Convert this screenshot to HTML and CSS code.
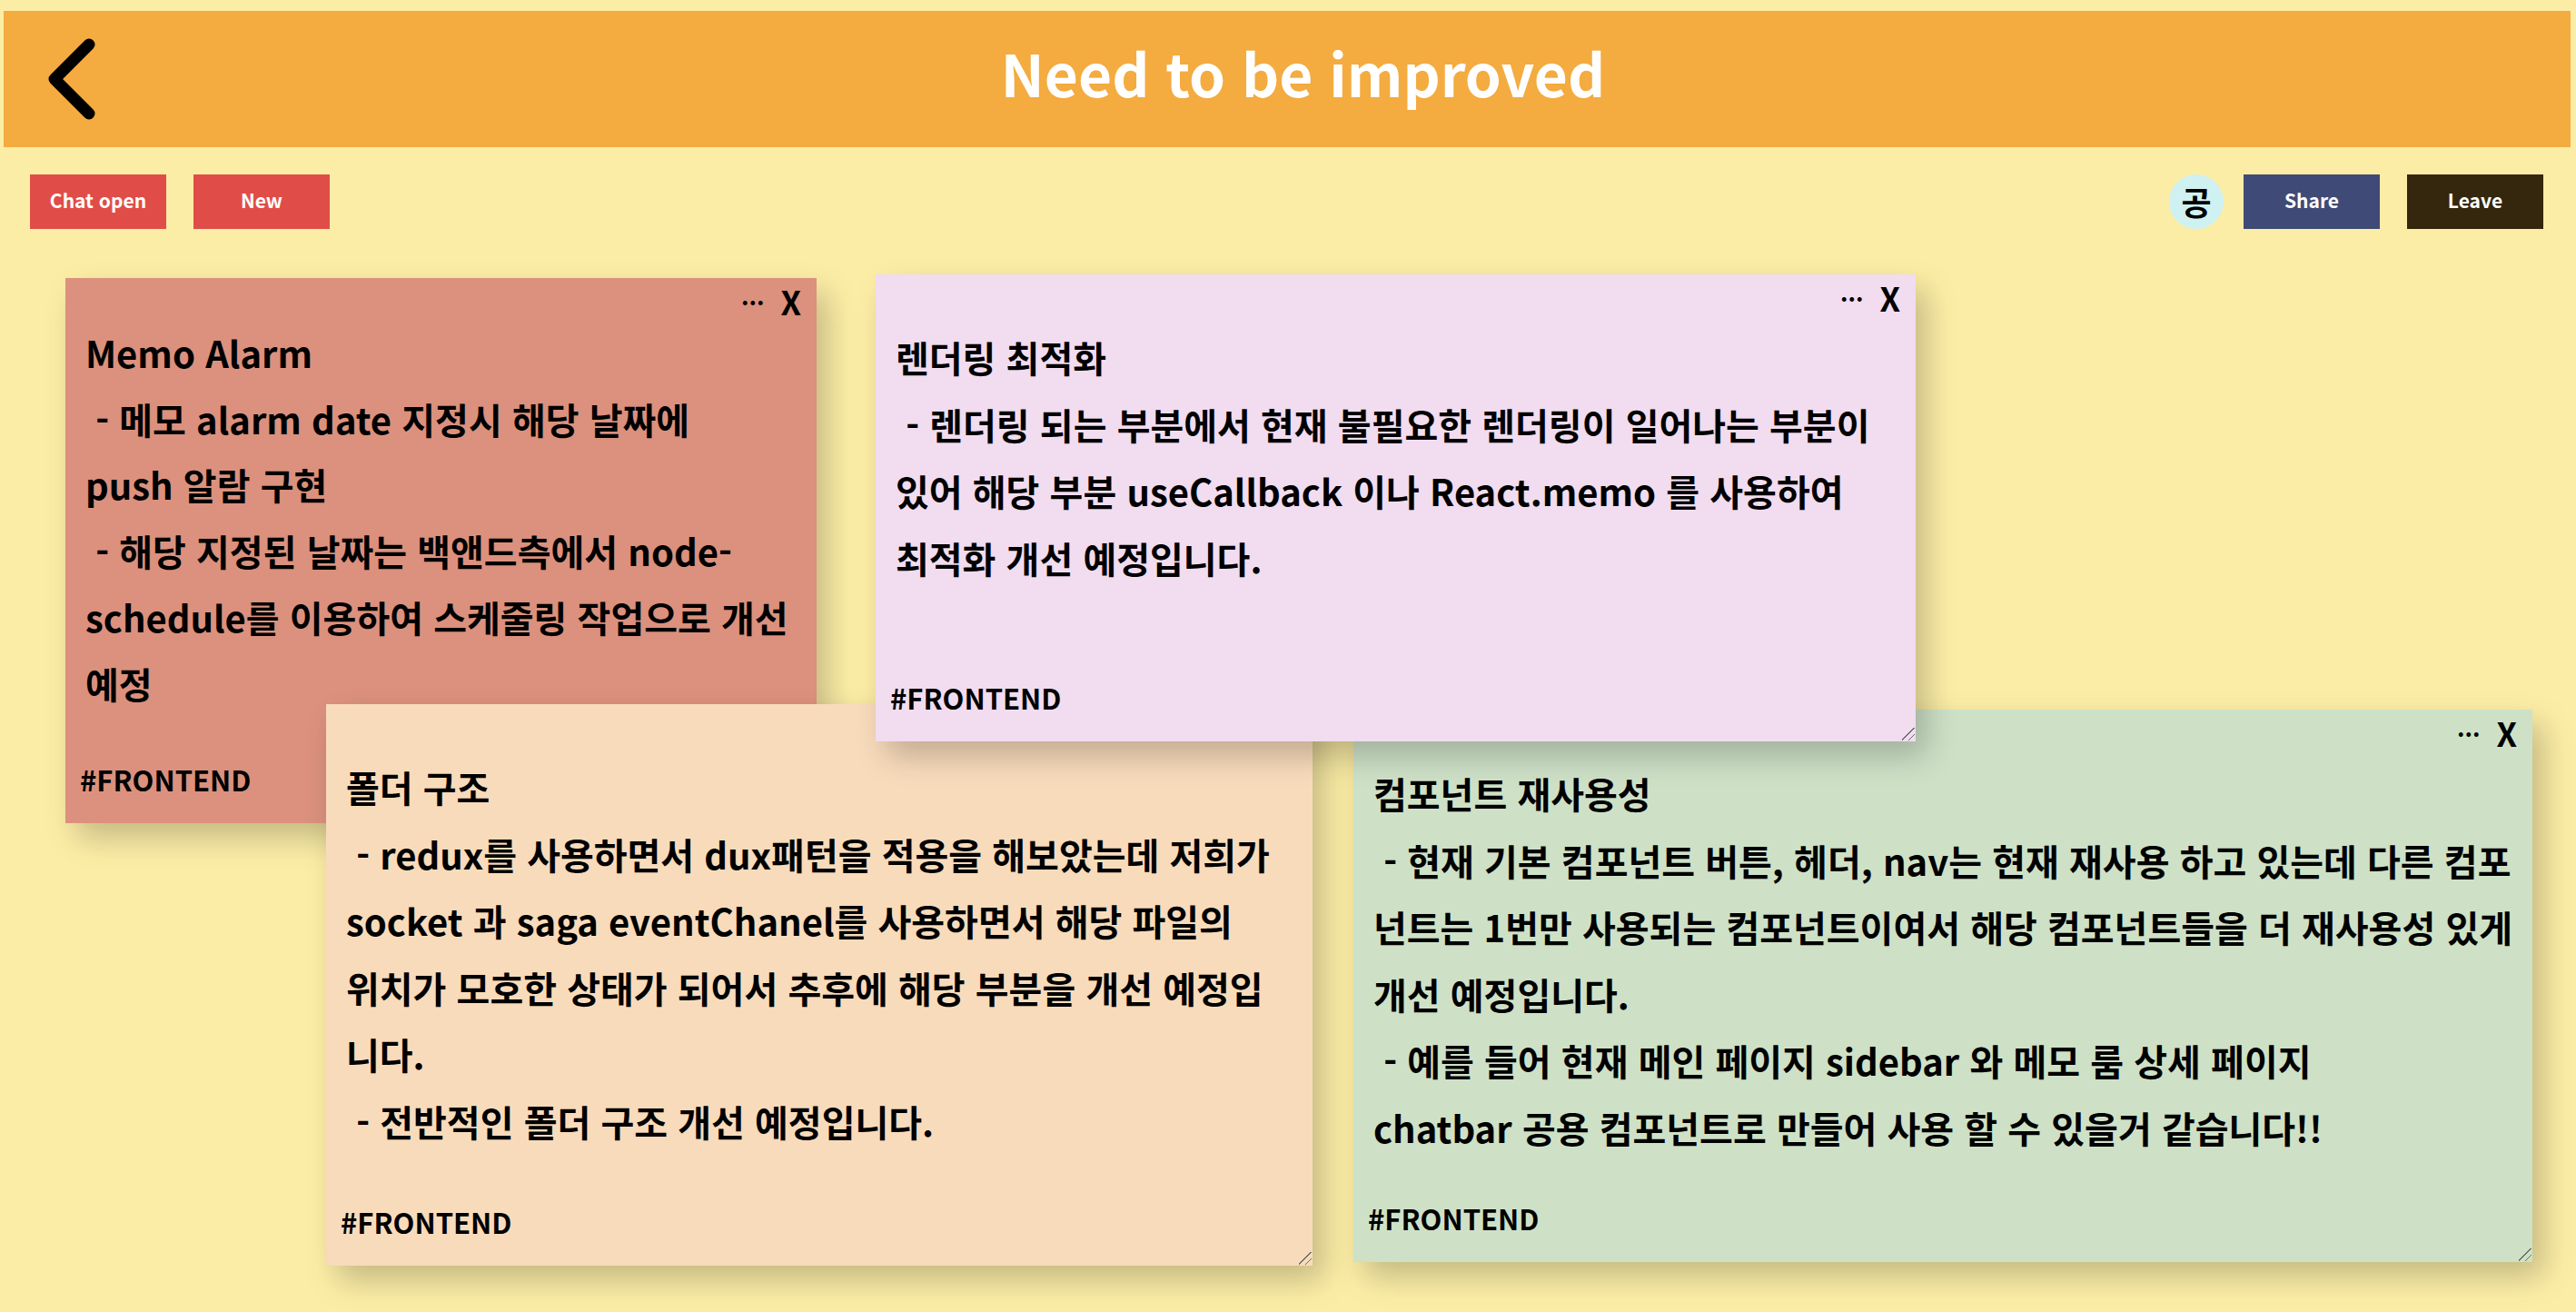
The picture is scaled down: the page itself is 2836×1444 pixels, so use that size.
FILE: index.html
```html
<!DOCTYPE html>
<html lang="ko">
<head>
<meta charset="UTF-8">
<meta name="viewport" content="width=device-width, initial-scale=1.0">
<title>Need to be improved</title>
<link rel="stylesheet" href="styles.css">
</head>
<body>

<header class="top-header">
    <a class="back-link" href="#" aria-label="back">
        <svg class="back-icon" viewBox="0 0 54 90">
            <polyline points="46,7 8,45 46,83"></polyline>
        </svg>
    </a>
    <h1 class="room-title">Need to be improved</h1>
</header>

<div class="toolbar">
    <div class="toolbar-group">
        <button class="btn btn-red">Chat open</button>
        <button class="btn btn-red">New</button>
    </div>
    <div class="toolbar-group toolbar-right">
        <div class="avatar">공</div>
        <button class="btn btn-navy">Share</button>
        <button class="btn btn-brown">Leave</button>
    </div>
</div>

<main class="board">
    <!-- 메모 위치는 드래그 결과 값 -->
    <section class="memo memo-red">
        <div class="memo-controls"><span class="memo-more">...</span><span class="memo-close">X</span></div>
<div class="memo-text">Memo Alarm
 - 메모 alarm date 지정시 해당 날짜에
push 알람 구현
 - 해당 지정된 날짜는 백앤드측에서 node-
schedule를 이용하여 스케줄링 작업으로 개선
예정</div>
        <div class="memo-tag">#FRONTEND</div>
    </section>

    <section class="memo memo-peach">
        <div class="memo-controls"><span class="memo-more">...</span><span class="memo-close">X</span></div>
<div class="memo-text">폴더 구조
 - redux를 사용하면서 dux패턴을 적용을 해보았는데 저희가
socket 과 saga eventChanel를 사용하면서 해당 파일의
위치가 모호한 상태가 되어서 추후에 해당 부분을 개선 예정입
니다.
 - 전반적인 폴더 구조 개선 예정입니다.</div>
        <div class="memo-tag">#FRONTEND</div>
    </section>

    <section class="memo memo-green">
        <div class="memo-controls"><span class="memo-more">...</span><span class="memo-close">X</span></div>
<div class="memo-text">컴포넌트 재사용성
 - 현재 기본 컴포넌트 버튼, 헤더, nav는 현재 재사용 하고 있는데 다른 컴포
넌트는 1번만 사용되는 컴포넌트이여서 해당 컴포넌트들을 더 재사용성 있게
개선 예정입니다.
 - 예를 들어 현재 메인 페이지 sidebar 와 메모 룸 상세 페이지
chatbar 공용 컴포넌트로 만들어 사용 할 수 있을거 같습니다!!</div>
        <div class="memo-tag">#FRONTEND</div>
    </section>

    <section class="memo memo-lilac">
        <div class="memo-controls"><span class="memo-more">...</span><span class="memo-close">X</span></div>
<div class="memo-text">렌더링 최적화
 - 렌더링 되는 부분에서 현재 불필요한 렌더링이 일어나는 부분이
있어 해당 부분 useCallback 이나 React.memo 를 사용하여
최적화 개선 예정입니다.</div>
        <div class="memo-tag">#FRONTEND</div>
    </section>
</main>

</body>
</html>
```
FILE: styles.css
```css
html, body {
  height: 100%;
}
body {
  font-family: "Noto Sans CJK KR", "Noto Sans", sans-serif;
  font-weight: 700;
  margin: 0;
  padding: 12px 6px 0 4px;
  box-sizing: border-box;
  background-color: #fcedA6;
  color: #000;
  overflow: hidden;
}
.top-header {
  display: flex;
  align-items: center;
  height: 150px;
  padding-left: 48px;
  background-color: #f4ab3f;
}
.back-link {
  display: block;
  width: 54px;
  height: 90px;
}
.back-icon {
  display: block;
  width: 54px;
  height: 90px;
  fill: none;
  stroke: #000;
  stroke-width: 13;
  stroke-linecap: round;
  stroke-linejoin: round;
}
.room-title {
  flex: 1;
  margin: 0 0 16px;
  padding-right: 67px;
  text-align: center;
  font-size: 64px;
  font-weight: 700;
  color: #fff;
}
.toolbar {
  display: flex;
  justify-content: space-between;
  margin: 30px 0;
  padding: 0 30px 0 29px;
}
.toolbar-group {
  display: flex;
  gap: 30px;
}
.toolbar-right {
  gap: 22px;
}
.toolbar-right .btn-brown {
  margin-left: 8px;
}
.btn {
  width: 150px;
  height: 60px;
  border: none;
  padding: 0 0 5px;
  color: #fff;
  font-family: inherit;
  font-weight: 700;
  font-size: 21px;
  cursor: pointer;
}
.btn-red {
  background-color: #e04d48;
}
.btn-navy {
  background-color: #3f4b76;
}
.btn-brown {
  background-color: #34270d;
}
.avatar {
  width: 60px;
  height: 60px;
  padding-bottom: 3px;
  box-sizing: border-box;
  border-radius: 50%;
  background-color: #cff1f2;
  display: flex;
  align-items: center;
  justify-content: center;
  font-size: 36px;
}
.board {
  position: relative;
  height: 1162px;
}
.memo {
  position: absolute;
  display: flex;
  flex-direction: column;
  box-sizing: border-box;
  padding: 0 17px 25px 16px;
  box-shadow: 12px 16px 32px rgba(0, 0, 0, 0.22);
  overflow: hidden;
}
/* resize handle */
.memo::after {
  content: '';
  position: absolute;
  right: 1px;
  bottom: 1px;
  width: 14px;
  height: 14px;
  background: linear-gradient(135deg, transparent 46%, #6e6e6e 46%, #6e6e6e 52%, transparent 52%, transparent 72%, #6e6e6e 72%, #6e6e6e 78%, transparent 78%);
}
.memo-red {
  left: 68px;
  top: 24px;
  width: 827px;
  height: 600px;
  background-color: #db917d;
}
.memo-peach {
  left: 355px;
  top: 493px;
  width: 1086px;
  height: 618px;
  background-color: #f8dbbb;
}
.memo-green {
  left: 1486px;
  top: 499px;
  width: 1298px;
  height: 608px;
  background-color: #cee1c7;
}
.memo-lilac {
  left: 960px;
  top: 20px;
  width: 1145px;
  height: 514px;
  background-color: #f1dcf0;
}
.memo-controls {
  display: flex;
  justify-content: flex-end;
  align-items: center;
  gap: 18px;
  height: 50px;
  flex-shrink: 0;
  line-height: 1;
}
.memo-more {
  font-size: 26px;
  margin-bottom: 12px;
}
.memo-close {
  font-size: 36px;
}
.memo-text {
  flex: 1;
  margin: 0 0 0 6px;
  padding-top: 5px;
  white-space: pre;
  font-size: 40px;
  font-weight: 700;
  line-height: 73.5px;
}
.memo-green .memo-text {
  padding-top: 6px;
}
.memo-red .memo-text {
  padding-top: 0;
  margin-top: -4px;
  line-height: 72.7px;
}
.memo-tag {
  font-size: 31px;
  line-height: 46px;
}
```
